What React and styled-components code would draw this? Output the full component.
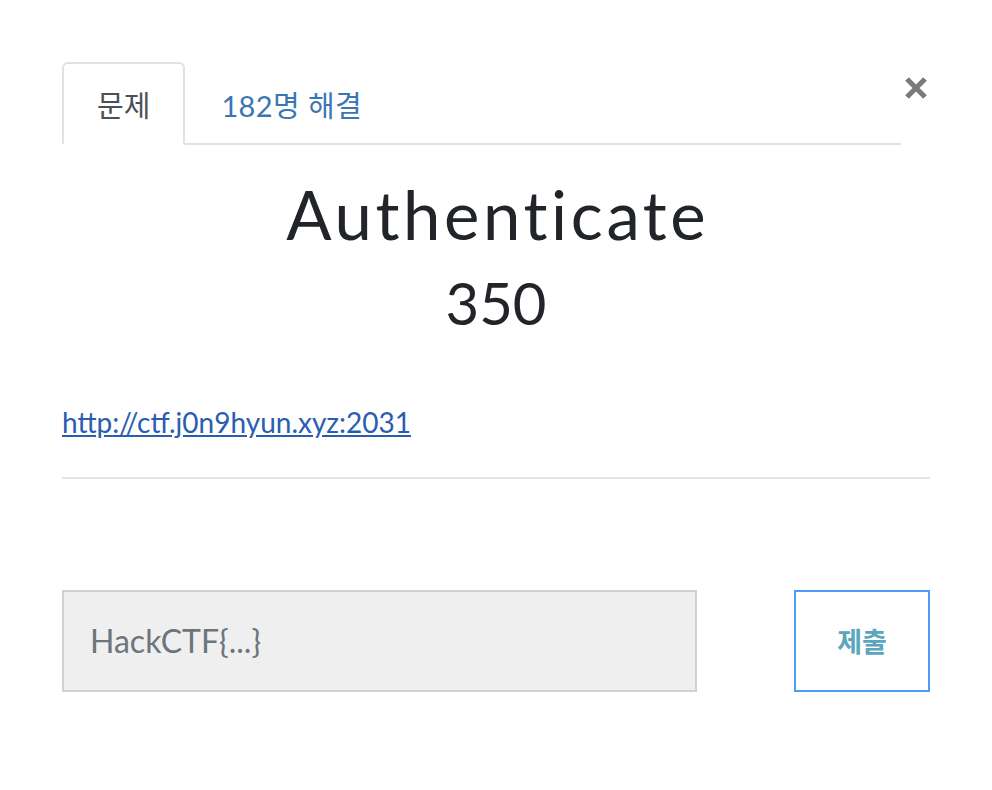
import React from "react";
import styled, { createGlobalStyle } from "styled-components";

const Global = createGlobalStyle`
  html, body { margin: 0; padding: 0; background: #fff; }
  body { font-family: Lato, "Noto Sans CJK KR", sans-serif; color: #212529; }
  * { box-sizing: border-box; }
`;

const Modal = styled.div`
  width: 992px;
  height: 790px;
  padding: 62px 62px 0 62px;
  display: flex;
  flex-direction: column;
`;

const Header = styled.div`
  display: flex;
  align-items: flex-start;
`;

const TabList = styled.div`
  flex: 1;
  display: flex;
  border-bottom: 2px solid #dee2e6;
  margin-right: 3px;
`;

const Tab = styled.div`
  height: 83px;
  padding: 0 ${(p) => (p.$active ? 33 : 34)}px;
  display: flex;
  align-items: center;
  font-size: 29px;
  letter-spacing: ${(p) => (p.$active ? 0 : 0.4)}px;
  font-family: Lato, "Noto Sans CJK KR", sans-serif;
  margin-bottom: -2px;
  border: 2px solid ${(p) => (p.$active ? "#dee2e6" : "transparent")};
  border-bottom-color: ${(p) => (p.$active ? "#fff" : "transparent")};
  border-radius: 6px 6px 0 0;
  color: ${(p) => (p.$active ? "#495057" : "#3a76b5")};
  background: ${(p) => (p.$active ? "#fff" : "transparent")};
`;

const Close = styled.button`
  border: 0;
  background: none;
  padding: 0;
  margin-top: 14px;
  margin-right: 2px;
  width: 24px;
  height: 24px;
  display: flex;
  cursor: pointer;
`;

const Title = styled.h1`
  margin: 29px 0 0 0;
  text-align: center;
  font-weight: 400;
  font-size: 67px;
  line-height: 1.2;
  letter-spacing: 3.6px;
  text-indent: 3.6px;
  color: #212529;
`;

const Points = styled.div`
  text-align: center;
  font-size: 58px;
  line-height: 1.2;
  color: #212529;
  margin-top: 14px;
`;

const Description = styled.p`
  margin: 63px 0 0 0;
  font-size: 28px;
  line-height: 1.5;
`;

const Link = styled.a`
  color: #2a5db0;
  text-decoration: underline;
`;

const Divider = styled.hr`
  margin: 34px 0 0 0;
  border: 0;
  border-top: 2px solid #e3e3e3;
`;

const Form = styled.form`
  margin-top: 111px;
  display: flex;
  gap: 97px;
`;

const Input = styled.input`
  flex: 1;
  height: 102px;
  background: #efefef;
  border: 2px solid #cfd2d4;
  padding: 0 26px;
  font-size: 32px;
  font-family: Lato, sans-serif;
  color: #495057;
  outline: none;
  &::placeholder { color: #6c757d; opacity: 1; }
`;

const Submit = styled.button`
  width: 136px;
  height: 102px;
  background: #fff;
  border: 2px solid #4d9cf8;
  color: #5aa6bd;
  font-weight: 700;
  font-size: 27px;
  font-family: "Noto Sans CJK KR", sans-serif;
`;

export default function App() {
  return (
    <>
      <Global />
      <Modal>
        <Header>
          <TabList>
            <Tab $active>문제</Tab>
            <Tab>182명 해결</Tab>
          </TabList>
          <Close aria-label="close">
            <svg width="24" height="24" viewBox="0 0 24 24">
              <path d="M3 3 L21 21 M21 3 L3 21" stroke="#7a7a7a" strokeWidth="5" strokeLinecap="butt" />
            </svg>
          </Close>
        </Header>
        <Title>Authenticate</Title>
        <Points>350</Points>
        <Description>
          <Link href="#">http://ctf.j0n9hyun.xyz:2031</Link>
        </Description>
        <Divider />
        <Form onSubmit={(e) => e.preventDefault()}>
          <Input placeholder="HackCTF{...}" />
          <Submit type="submit">제출</Submit>
        </Form>
      </Modal>
    </>
  );
}
